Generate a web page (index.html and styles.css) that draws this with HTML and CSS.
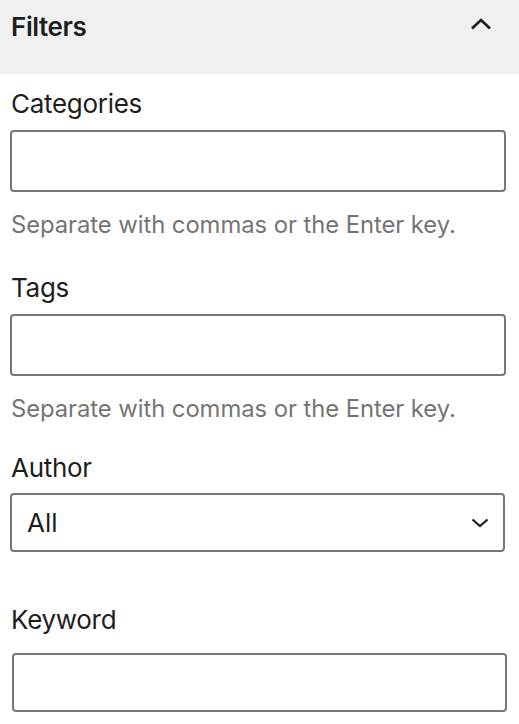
FILE: index.html
```html
<!DOCTYPE html>
<html>
<head>
<meta charset="utf-8">
<link rel="stylesheet" href="styles.css">
</head>
<body>
<div class="panel">
  <div class="panel-header">
    <span class="panel-title">Filters</span>
    <svg class="toggle" width="24" height="24" viewBox="0 0 24 24"><path d="M3 10.5 L12 2 L21 10.5" fill="none" stroke="#1e1e1e" stroke-width="2.6"/></svg>
  </div>
  <div class="panel-body">
    <div class="field f-cat">
      <div class="label">Categories</div>
      <div class="input"></div>
      <div class="help">Separate with commas or the Enter key.</div>
    </div>
    <div class="field f-tags">
      <div class="label">Tags</div>
      <div class="input"></div>
      <div class="help">Separate with commas or the Enter key.</div>
    </div>
    <div class="field f-author">
      <div class="label">Author</div>
      <div class="select">
        <span class="select-value">All</span>
        <svg class="select-chev" width="18" height="10" viewBox="0 0 18 10"><path d="M1.5 1.5 L9 8 L16.5 1.5" fill="none" stroke="#1e1e1e" stroke-width="2.2"/></svg>
      </div>
    </div>
    <div class="field f-key">
      <div class="label">Keyword</div>
      <div class="input input-key"></div>
    </div>
  </div>
</div>
</body>
</html>
```

FILE: styles.css
```css
html, body {
  margin: 0;
  padding: 0;
  background: #ffffff;
}
body {
  font-family: Inter, "Liberation Sans", sans-serif;
  color: #1e1e1e;
  width: 519px;
}
.panel-header {
  background: #f0f0f0;
  height: 74px;
  box-sizing: border-box;
  padding: 11px 0 0 11px;
  display: flex;
  justify-content: space-between;
  align-items: flex-start;
}
.panel-title {
  font-size: 26px;
  font-weight: 600;
  line-height: 32px;
  letter-spacing: -0.4px;
}
.toggle {
  margin: 7px 26px 0 0;
}
.panel-body {
  padding: 0 13px 0 10px;
}
.label {
  font-size: 26px;
  line-height: 32px;
  padding-left: 1px;
  letter-spacing: -0.3px;
}
.input {
  height: 62px;
  box-sizing: border-box;
  border: 2px solid #777777;
  border-radius: 4px;
  margin-top: 10px;
}
.help {
  font-size: 23.8px;
  line-height: 28px;
  color: #757575;
  margin-top: 19px;
  padding-left: 1px;
  letter-spacing: -0.05px;
}
.f-cat { margin-top: 14px; }
.f-tags { margin-top: 33px; }
.f-author { margin-top: 29px; }
.f-key { margin-top: 52px; }
.select {
  height: 59px;
  box-sizing: border-box;
  border: 2px solid #777777;
  border-radius: 4px;
  margin-top: 9px;
  display: flex;
  align-items: center;
  justify-content: space-between;
  padding: 0 14px 0 15px;
  margin-right: 1px;
}
.select-value {
  font-size: 26px;
  line-height: 32px;
}
.input-key {
  margin-top: 17px;
  margin-left: 2px;
  margin-right: -1px;
  height: 59px;
}
```
